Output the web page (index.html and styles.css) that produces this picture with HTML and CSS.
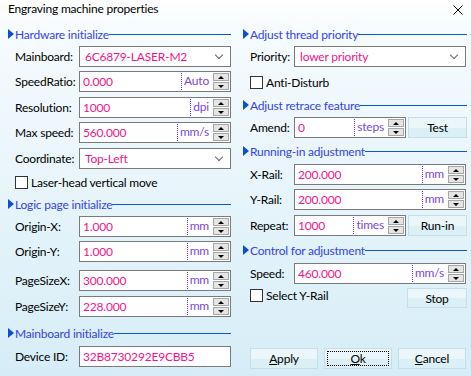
FILE: index.html
```html
<!DOCTYPE html>
<html>
<head>
<meta charset="utf-8">
<link rel="stylesheet" href="styles.css">
</head>
<body>
<div class="window">
  <div class="titlebar">
    <span class="title">Engraving machine properties</span>
    <svg class="close" width="10" height="10" viewBox="0 0 10 10"><path d="M0.5 0.5 L9.5 9.5 M9.5 0.5 L0.5 9.5" stroke="#000" stroke-width="1"/></svg>
  </div>
  <div class="content">
    <div class="col left">
      <div class="hdr"><span class="tri"></span><span class="htext">Hardware initialize</span><span class="hline"></span></div>
      <div class="row"><span class="lbl">Mainboard:</span><div class="field combo"><span class="val">6C6879-LASER-M2</span><span class="chev"></span></div></div>
      <div class="row"><span class="lbl">SpeedRatio:</span><div class="field"><span class="val">0.000</span><span class="unit">Auto</span><span class="spin"><i class="up"></i><i class="dn"></i></span></div></div>
      <div class="row m5"><span class="lbl">Resolution:</span><div class="field"><span class="val">1000</span><span class="unit">dpi</span><span class="spin"><i class="up"></i><i class="dn"></i></span></div></div>
      <div class="row"><span class="lbl">Max speed:</span><div class="field"><span class="val">560.000</span><span class="unit">mm/s</span><span class="spin"><i class="up"></i><i class="dn"></i></span></div></div>
      <div class="row m5"><span class="lbl">Coordinate:</span><div class="field combo"><span class="val">Top-Left</span><span class="chev"></span></div></div>
      <div class="chk m6"><span class="box"></span><span>Laser-head vertical move</span></div>
      <div class="hdr m7"><span class="tri"></span><span class="htext">Logic page initialize</span><span class="hline"></span></div>
      <div class="row"><span class="lbl">Origin-X:</span><div class="field"><span class="val">1.000</span><span class="unit">mm</span><span class="spin"><i class="up"></i><i class="dn"></i></span></div></div>
      <div class="row"><span class="lbl">Origin-Y:</span><div class="field"><span class="val">1.000</span><span class="unit">mm</span><span class="spin"><i class="up"></i><i class="dn"></i></span></div></div>
      <div class="row m8"><span class="lbl">PageSizeX:</span><div class="field"><span class="val">300.000</span><span class="unit">mm</span><span class="spin"><i class="up"></i><i class="dn"></i></span></div></div>
      <div class="row m5"><span class="lbl">PageSizeY:</span><div class="field"><span class="val">228.000</span><span class="unit">mm</span><span class="spin"><i class="up"></i><i class="dn"></i></span></div></div>
      <div class="hdr m8"><span class="tri"></span><span class="htext">Mainboard initialize</span><span class="hline"></span></div>
      <div class="row m5"><span class="lbl">Device ID:</span><div class="field"><span class="val">32B8730292E9CBB5</span></div></div>
    </div>
    <div class="col right">
      <div class="hdr"><span class="tri"></span><span class="htext">Adjust thread priority</span><span class="hline"></span></div>
      <div class="row"><span class="lbl">Priority:</span><div class="field combo"><span class="val">lower priority</span><span class="chev"></span></div></div>
      <div class="chk m8"><span class="box"></span><span>Anti-Disturb</span></div>
      <div class="hdr m8"><span class="tri"></span><span class="htext">Adjust retrace feature</span><span class="hline"></span></div>
      <div class="row"><span class="lbl">Amend:</span><div class="field short"><span class="val">0</span><span class="unit">steps</span><span class="spin"><i class="up"></i><i class="dn"></i></span></div><button class="btn side">Test</button></div>
      <div class="hdr m5"><span class="tri"></span><span class="htext">Running-in adjustment</span><span class="hline"></span></div>
      <div class="row m5"><span class="lbl">X-Rail:</span><div class="field"><span class="val">200.000</span><span class="unit">mm</span><span class="spin"><i class="up"></i><i class="dn"></i></span></div></div>
      <div class="row"><span class="lbl">Y-Rail:</span><div class="field"><span class="val">200.000</span><span class="unit">mm</span><span class="spin"><i class="up"></i><i class="dn"></i></span></div></div>
      <div class="row m5"><span class="lbl">Repeat:</span><div class="field short"><span class="val">1000</span><span class="unit">times</span><span class="spin"><i class="up"></i><i class="dn"></i></span></div><button class="btn side">Run-in</button></div>
      <div class="hdr m6"><span class="tri"></span><span class="htext">Control for adjustment</span><span class="hline"></span></div>
      <div class="row m5"><span class="lbl">Speed:</span><div class="field"><span class="val">460.000</span><span class="unit">mm/s</span><span class="spin"><i class="up"></i><i class="dn"></i></span></div></div>
      <div class="row stoprow"><div class="chk"><span class="box"></span><span>Select Y-Rail</span></div><button class="btn side stop">Stop</button></div>
      <div class="actions">
        <button class="btn act"><u>A</u>pply</button>
        <button class="btn act focus"><u>O</u>k</button>
        <button class="btn act"><u>C</u>ancel</button>
      </div>
    </div>
  </div>
</div>
</body>
</html>
```

FILE: styles.css
```css
* { box-sizing: border-box; }
html, body { margin: 0; padding: 0; }
body {
  width: 471px;
  height: 376px;
  overflow: hidden;
  font-family: Lato, "Noto Sans", sans-serif;
  font-size: 12px;
  letter-spacing: -0.2px;
  color: #000;
}
.window {
  width: 471px;
  height: 376px;
  background: linear-gradient(#ffffff 0px, #f6fbfe 30px, #d6edf7 376px);
  display: flex;
  flex-direction: column;
}
.titlebar {
  height: 26px;
  display: flex;
  align-items: flex-start;
  justify-content: space-between;
  padding: 1px 8px 0 8px;
  line-height: 16px;
}
.close { margin-top: 4px; margin-right: 0; }
.content {
  display: flex;
  padding-left: 8px;
  gap: 12px;
}
.col { display: flex; flex-direction: column; gap: 4px; }
.left { width: 223px; }
.right { width: 224px; }
.m5 { margin-top: 1px; }
.m6 { margin-top: 2px; }
.m7 { margin-top: 3px; }
.m8 { margin-top: 4px; }
.hdr {
  height: 16px;
  display: flex;
  align-items: center;
  color: #3344e8;
}
.tri {
  width: 0; height: 0;
  border-top: 5px solid transparent;
  border-bottom: 5px solid transparent;
  border-left: 6px solid #0b4fd8;
  margin-right: 1px;
}
.htext { white-space: nowrap; }
.hline { flex: 1; height: 1px; background: #0b55d6; margin-top: 1px; }
.row {
  display: flex;
  align-items: center;
  height: 21px;
  padding-left: 7px;
}
.lbl { flex: none; white-space: nowrap; }
.left .lbl { width: 64px; }
.right .lbl { width: 44px; }
.field {
  display: flex;
  align-items: center;
  height: 21px;
  border: 1px solid #7a7a7a;
  background: #fff;
  flex: none;
}
.left .field { width: 152px; }
.right .field { width: 172px; }
.right .field.short { width: 112px; }
.val {
  flex: 1;
  color: #f0148c;
  padding-left: 3px;
  white-space: nowrap;
}
.combo .val { padding-left: 5px; }
.chev {
  width: 6px; height: 6px;
  border-right: 1px solid #666;
  border-bottom: 1px solid #666;
  transform: rotate(45deg);
  margin-right: 8px;
  margin-top: -3px;
}
.unit {
  color: #7a48e0;
  border-left: 1px dotted #5a3ad0;
  height: 17px;
  line-height: 16px;
  padding-left: 2px;
  padding-right: 4px;
}
.spin {
  display: flex;
  flex-direction: column;
  gap: 1px;
  width: 16px;
  margin-right: 1px;
}
.spin i {
  height: 8px;
  border: 1px solid #a6a6a6;
  background: #e5e5e5;
  display: flex;
  align-items: center;
  justify-content: center;
}
.spin i::after {
  content: "";
  width: 0; height: 0;
  border-left: 3px solid transparent;
  border-right: 3px solid transparent;
}
.spin .up::after { border-bottom: 3px solid #000; }
.spin .dn::after { border-top: 3px solid #000; }
.chk {
  display: flex;
  align-items: center;
  height: 14px;
  padding-left: 7px;
  gap: 3px;
}
.box {
  width: 13px; height: 13px;
  border: 1px solid #333;
  background: #fff;
}
.btn {
  font: inherit;
  letter-spacing: inherit;
  color: #000;
  border: 1px solid #c4dfea;
  background: linear-gradient(#ebf6fa 0, #ebf6fa 50%, #dbeff7 50%, #dbeff7 100%);
  padding: 0;
  height: 21px;
}
.side { width: 60px; margin-left: 2px; }
.stoprow { padding-left: 0; align-items: flex-start; height: 20px; }
.stoprow .chk { flex: 1; }
.stop { height: 20px; margin-left: 0; }
.actions {
  display: flex;
  margin-top: 36px;
  padding-left: 7px;
  gap: 6px;
}
.act { width: 68px; height: 21px; }
.focus { outline: 1px dotted #000; outline-offset: -4px; }
u { text-decoration: underline; text-underline-offset: 1px; }
```
